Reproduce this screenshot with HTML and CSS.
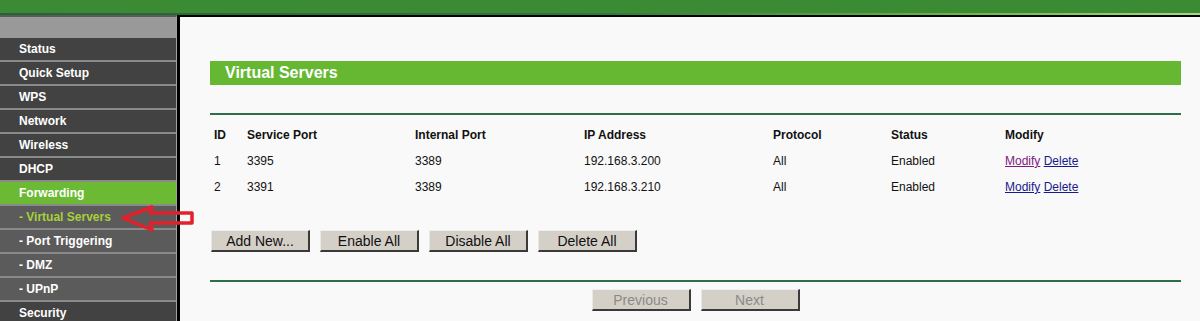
FILE: index.html
```html
<!DOCTYPE html>
<html lang="en">
<head>
    <meta charset="UTF-8">
    <title>Virtual Servers</title>
    <link rel="stylesheet" href="styles.css">
</head>
<body>
    <div class="top"></div>
    <div class="main">
        <div class="menu">
            <div class="menu-head"></div>
            <div class="item">Status</div>
            <div class="item">Quick Setup</div>
            <div class="item">WPS</div>
            <div class="item">Network</div>
            <div class="item">Wireless</div>
            <div class="item">DHCP</div>
            <div class="item active">Forwarding</div>
            <div class="item sub current">- Virtual Servers</div>
            <div class="item sub">- Port Triggering</div>
            <div class="item sub">- DMZ</div>
            <div class="item sub">- UPnP</div>
            <div class="item">Security</div>
        </div>
        <div class="content">
            <div class="title">Virtual Servers</div>
            <div class="rule"></div>
            <div class="table">
                <div class="row head">
                    <span>ID</span><span>Service Port</span><span>Internal Port</span><span>IP Address</span><span>Protocol</span><span>Status</span><span>Modify</span>
                </div>
                <div class="row">
                    <span>1</span><span>3395</span><span>3389</span><span>192.168.3.200</span><span>All</span><span>Enabled</span>
                    <span><a href="#" class="visited">Modify</a> <a href="#">Delete</a></span>
                </div>
                <div class="row">
                    <span>2</span><span>3391</span><span>3389</span><span>192.168.3.210</span><span>All</span><span>Enabled</span>
                    <span><a href="#">Modify</a> <a href="#">Delete</a></span>
                </div>
            </div>
            <div class="actions">
                <button>Add New...</button>
                <button>Enable All</button>
                <button>Disable All</button>
                <button>Delete All</button>
            </div>
            <div class="rule bottom"></div>
            <div class="pager">
                <button disabled>Previous</button>
                <button disabled>Next</button>
            </div>
        </div>
    </div>

    <svg class="arrow" width="80" height="32" viewBox="0 0 80 32">
        <polygon points="5,15 34,4 32,10 74,10 74,20 32,20 34,27" fill="none" stroke="#e3202b" stroke-width="3.5" stroke-linejoin="round"/>
    </svg>
</body>
</html>
```

FILE: styles.css
```css
body {
    margin: 0;
    width: 1200px;
    height: 321px;
    overflow: hidden;
    background-color: #f9f9f9;
    font-family: "Liberation Sans", Arial, sans-serif;
    position: relative;
}

.top {
    height: 13px;
    background-color: #3b8b35;
    border-bottom: 2px solid #2c6b3c;
    border-image: linear-gradient(to right, #2a5f3a, #2b7a3e 50%, #6fb545 80%, #a8d884) 1;
}

.main {
    display: flex;
    height: 306px;
    overflow: hidden;
}

.menu {
    width: 176px;
    border-right: 1px solid #a0a0a0;
    border-top: 2px solid #5a5a5a;
    background-color: #424242;
}

.menu-head {
    height: 21px;
    background-color: #999999;
}

.item {
    height: 22px;
    line-height: 22px;
    border-bottom: 2px solid #8a8a8a;
    padding-left: 19px;
    color: #fff;
    font-size: 12px;
    font-weight: 700;
    background-color: #424242;
}

.item.sub {
    background-color: #5b5b5b;
}

.item.active {
    background-color: #6cb934;
}

.item.current {
    color: #a6d03c;
}

.content {
    flex: 1;
    border-left: 3px solid #000;
    border-top: 2px solid #000;
    padding: 44px 19px 0 30px;
}

.title {
    height: 24px;
    line-height: 24px;
    background-color: #66b833;
    color: #fff;
    font-size: 16px;
    font-weight: 700;
    padding-left: 15px;
}

.rule {
    height: 2px;
    background-color: #2f6e4c;
    margin-top: 28px;
}

.rule.bottom {
    margin-top: 28px;
}

.table {
    margin-top: 7px;
}

.row {
    display: grid;
    grid-template-columns: 33px 168px 169px 189px 118px 114px 1fr;
    height: 26px;
    line-height: 26px;
    padding-left: 4px;
    font-size: 12px;
    color: #111;
}

.row.head {
    font-weight: 700;
}

.row a {
    color: #1a1a8c;
}

.row a.visited {
    color: #7d1a7d;
}

.actions {
    margin-top: 30px;
    padding-left: 1px;
    display: flex;
    gap: 10px;
}

button {
    width: 99px;
    height: 22px;
    padding: 0;
    background-color: #d4d0c8;
    border: 1px solid;
    border-color: #f0f0f0 #3a3a3a #3a3a3a #e8e8e8;
    border-width: 1px 2px 2px 1px;
    font-family: "Liberation Sans", Arial, sans-serif;
    font-size: 14px;
    color: #111;
}

button:disabled {
    color: #8a8a8a;
}

.pager {
    margin-top: 7px;
    display: flex;
    justify-content: center;
    gap: 10px;
}

.arrow {
    position: absolute;
    left: 118px;
    top: 203px;
}
```
